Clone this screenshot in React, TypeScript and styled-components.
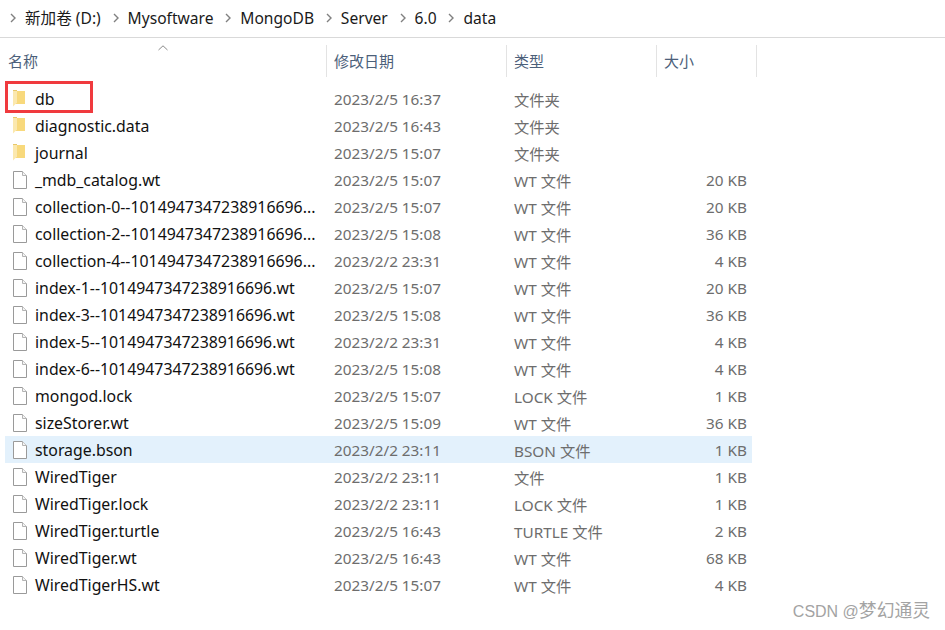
import React from 'react';
import styled, { createGlobalStyle } from 'styled-components';

const GlobalStyle = createGlobalStyle`
  html, body {
    margin: 0;
    padding: 0;
    background: #fff;
  }
  body {
    font-family: 'Noto Sans', 'Noto Sans CJK SC', sans-serif;
  }
`;

const crumbs = ['新加卷 (D:)', 'Mysoftware', 'MongoDB', 'Server', '6.0', 'data'];

interface IFile {
  name: string;
  date: string;
  type: string;
  size?: string;
  folder?: boolean;
  selected?: boolean;
}

const files: IFile[] = [
  { name: 'db', date: '2023/2/5 16:37', type: '文件夹', folder: true },
  { name: 'diagnostic.data', date: '2023/2/5 16:43', type: '文件夹', folder: true },
  { name: 'journal', date: '2023/2/5 15:07', type: '文件夹', folder: true },
  { name: '_mdb_catalog.wt', date: '2023/2/5 15:07', type: 'WT 文件', size: '20 KB' },
  { name: 'collection-0--1014947347238916696...', date: '2023/2/5 15:07', type: 'WT 文件', size: '20 KB' },
  { name: 'collection-2--1014947347238916696...', date: '2023/2/5 15:08', type: 'WT 文件', size: '36 KB' },
  { name: 'collection-4--1014947347238916696...', date: '2023/2/2 23:31', type: 'WT 文件', size: '4 KB' },
  { name: 'index-1--1014947347238916696.wt', date: '2023/2/5 15:07', type: 'WT 文件', size: '20 KB' },
  { name: 'index-3--1014947347238916696.wt', date: '2023/2/5 15:08', type: 'WT 文件', size: '36 KB' },
  { name: 'index-5--1014947347238916696.wt', date: '2023/2/2 23:31', type: 'WT 文件', size: '4 KB' },
  { name: 'index-6--1014947347238916696.wt', date: '2023/2/5 15:08', type: 'WT 文件', size: '4 KB' },
  { name: 'mongod.lock', date: '2023/2/5 15:07', type: 'LOCK 文件', size: '1 KB' },
  { name: 'sizeStorer.wt', date: '2023/2/5 15:09', type: 'WT 文件', size: '36 KB' },
  { name: 'storage.bson', date: '2023/2/2 23:11', type: 'BSON 文件', size: '1 KB', selected: true },
  { name: 'WiredTiger', date: '2023/2/2 23:11', type: '文件', size: '1 KB' },
  { name: 'WiredTiger.lock', date: '2023/2/2 23:11', type: 'LOCK 文件', size: '1 KB' },
  { name: 'WiredTiger.turtle', date: '2023/2/5 16:43', type: 'TURTLE 文件', size: '2 KB' },
  { name: 'WiredTiger.wt', date: '2023/2/5 16:43', type: 'WT 文件', size: '68 KB' },
  { name: 'WiredTigerHS.wt', date: '2023/2/5 15:07', type: 'WT 文件', size: '4 KB' },
];

// tall explorer folder: pale back flap on the left, solid panel on the right
const FolderIcon = () => (
  <svg width="12" height="17" viewBox="0 0 12 17">
    <path d="M4 1h8v13H1.5L4 12.5z" fill="#f8d97c" />
    <path d="M0 1h4v11.5L0 16.5z" fill="#fbe8ae" />
    <path d="M0 .5h4" stroke="#e8c869" fill="none" />
  </svg>
);

const FileIcon = () => (
  <svg width="14" height="18" viewBox="0 0 14 18">
    <path d="M.5.5h9l4 4v13H.5z" fill="#fff" stroke="#9a9a9a" />
    <path d="M9.5.5v4h4" fill="#f4f4f4" stroke="#b4b4b4" />
  </svg>
);

const Chevron = () => (
  <svg width="8" height="10" viewBox="0 0 8 10">
    <path d="M2 1l4 4-4 4" fill="none" stroke="#808080" strokeWidth="1.4" />
  </svg>
);

export default function App() {
  return (
    <Window>
      <GlobalStyle />
      <Breadcrumb>
        {crumbs.map(crumb => (
          <Crumb key={crumb}>
            <Chevron />
            <span>{crumb}</span>
          </Crumb>
        ))}
      </Breadcrumb>
      <Header>
        <SortCaret width="10" height="6" viewBox="0 0 10 6">
          <path d="M.5 5L5 .8 9.5 5" fill="none" stroke="#8a8a8a" />
        </SortCaret>
        <HeaderCell>名称</HeaderCell>
        <HeaderCell>修改日期</HeaderCell>
        <HeaderCell>类型</HeaderCell>
        <HeaderCell>大小</HeaderCell>
      </Header>
      <List>
        <Highlight />
        {files.map(file => (
          <Row key={file.name} selected={file.selected}>
            <IconSlot>{file.folder ? <FolderIcon /> : <FileIcon />}</IconSlot>
            <Name>{file.name}</Name>
            <Detail>{file.date}</Detail>
            <Detail>{file.type}</Detail>
            <Size>{file.size}</Size>
          </Row>
        ))}
      </List>
      <Watermark>
        CSDN @<WatermarkName>梦幻通灵</WatermarkName>
      </Watermark>
    </Window>
  );
}

const Window = styled.div`
  position: relative;
  width: 945px;
  height: 630px;
  overflow: hidden;
  background: #fff;
  color: #1a1a1a;
`;

const Breadcrumb = styled.div`
  display: flex;
  align-items: center;
  height: 35px;
  padding: 0 0 2px 9px;
  border-bottom: 1px solid #d9d9d9;
  font-size: 15.6px;
`;

const Crumb = styled.div`
  display: flex;
  align-items: center;
  gap: 8px;
  margin-right: 10.8px;
`;

const Header = styled.div`
  position: relative;
  display: grid;
  grid-template-columns: 320px 180px 150px 100px;
  height: 32px;
  margin: 7px 0 0 7px;
  font-size: 15px;
  color: #4c607a;
`;

const SortCaret = styled.svg`
  position: absolute;
  left: 151px;
  top: 0;
`;

const HeaderCell = styled.div`
  display: flex;
  align-items: center;
  padding: 0 0 2px 1px;
  border-right: 1px solid #e3e3e3;

  &:not(:nth-of-type(1)) {
    padding-left: 7px;
  }
`;

const List = styled.div`
  position: relative;
  display: flex;
  flex-direction: column;
  margin-top: 8px;
`;

const Highlight = styled.div`
  position: absolute;
  left: 5px;
  top: 0;
  width: 88px;
  height: 32px;
  margin-top: -4px;
  box-sizing: border-box;
  border: 3px solid #f03a3e;
`;

const Row = styled.div<{ selected?: boolean }>`
  display: grid;
  grid-template-columns: 30px 299px 180px 150px 83px;
  align-items: center;
  width: 747px;
  height: 27px;
  margin-left: 5px;
  background: ${props => (props.selected ? '#e3f1fc' : 'transparent')};
  font-size: 15.85px;
`;

const IconSlot = styled.div`
  display: flex;
  align-items: center;
  padding-left: 8px;
`;

const Name = styled.div`
  white-space: nowrap;
  color: #111;
`;

const Detail = styled.div`
  font-size: 15.3px;
  color: #6d6d6d;
`;

const Size = styled(Detail)`
  text-align: right;
`;

const Watermark = styled.div`
  position: absolute;
  right: 15px;
  bottom: 8px;
  font-family: 'Liberation Sans', 'Noto Sans CJK SC', sans-serif;
  font-size: 16px;
  color: #a3a3a3;
`;

const WatermarkName = styled.span`
  font-size: 17.8px;
`;
